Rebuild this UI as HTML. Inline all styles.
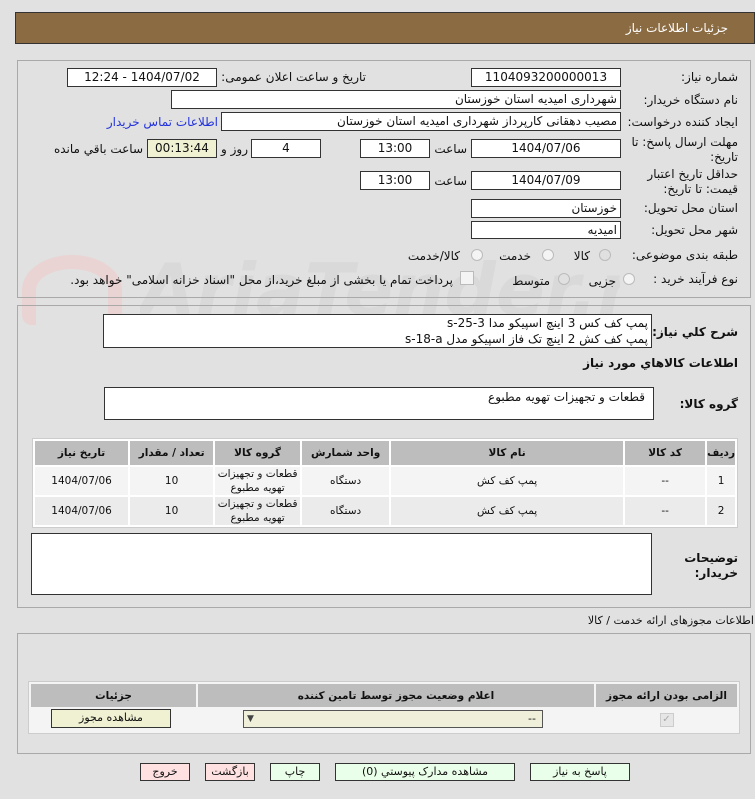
<!DOCTYPE html>
<html><head><meta charset="utf-8"><style>
body{margin:0;width:755px;height:799px;background:#e1e1e1;position:relative;overflow:hidden;font-family:"DejaVu Sans","Liberation Sans",sans-serif;font-size:11px;color:#111}
.a{position:absolute}
.t{position:absolute;white-space:nowrap;direction:rtl;line-height:14px}
.b{position:absolute;background:#fff;border:1px solid #333;box-sizing:border-box;direction:rtl;padding:0 3px;line-height:16px;font-size:12px;white-space:nowrap;overflow:hidden}
.c{text-align:center;padding:0}
.p{position:absolute;border:1px solid #a9a9a9;box-sizing:border-box}
.r{position:absolute;width:12px;height:12px;border-radius:50%;border:1px solid #bbb;background:#f4f4f4;box-sizing:border-box}
table{border-collapse:separate;border-spacing:2px;position:absolute;font-size:10.5px;direction:rtl}
td,th{text-align:center;padding:0}
th{background:#bdbdbd;font-weight:bold}
.btn{position:absolute;border:1px solid #333;box-sizing:border-box;text-align:center;line-height:16px;font-size:11px;direction:rtl}
.g{background:#eaffea}.k{background:#ffe1e1}
.wm{position:absolute;left:140px;top:245px;width:480px;overflow:hidden;font:italic bold 72px "DejaVu Sans",sans-serif;color:#d9d9d9;white-space:nowrap;line-height:90px}
</style></head><body>
<div class="wm">AriaTender.net</div>
<div class="a" style="left:22px;top:255px;width:100px;height:70px;border:14px solid #ead3d3;border-radius:50% 50% 10px 10px;border-bottom:none;box-sizing:border-box"></div>

<div class="a" style="left:15px;top:12px;width:740px;height:32px;background:#8b6b42;border:1px solid #333;box-sizing:border-box"></div>
<div class="t" style="right:27px;top:21px;color:#fff;font-size:12px">جزئیات اطلاعات نیاز</div>

<div class="p" style="left:17px;top:60px;width:734px;height:238px"></div>
<div class="t" style="right:17px;top:70px;font-size:12px">شماره نیاز:</div>
<div class="b c" style="left:471px;top:68px;width:150px;height:19px">1104093200000013</div>
<div class="t" style="right:389px;top:70px;font-size:12px">تاریخ و ساعت اعلان عمومی:</div>
<div class="b c" style="left:67px;top:68px;width:150px;height:19px">1404/07/02 - 12:24</div>

<div class="t" style="right:17px;top:93px;font-size:12px">نام دستگاه خریدار:</div>
<div class="b" style="left:171px;top:90px;width:450px;height:19px">شهرداری امیدیه استان خوزستان</div>

<div class="t" style="right:17px;top:115px;font-size:12px">ایجاد کننده درخواست:</div>
<div class="b" style="left:221px;top:112px;width:400px;height:19px">مصیب دهقانی کارپرداز شهرداری امیدیه استان خوزستان</div>
<div class="t" style="right:537px;top:115px;font-size:12px;color:#2233dd">اطلاعات تماس خریدار</div>

<div class="t" style="right:17px;top:135px;font-size:12px;line-height:15px">مهلت ارسال پاسخ: تا<br>تاریخ:</div>
<div class="b c" style="left:471px;top:139px;width:150px;height:19px">1404/07/06</div>
<div class="t" style="right:288px;top:142px;font-size:12px">ساعت</div>
<div class="b c" style="left:360px;top:139px;width:70px;height:19px">13:00</div>
<div class="b c" style="left:251px;top:139px;width:70px;height:19px">4</div>
<div class="t" style="right:507px;top:142px;font-size:12px">روز و</div>
<div class="b c" style="left:147px;top:139px;width:70px;height:19px;background:#f0f0d2">00:13:44</div>
<div class="t" style="right:612px;top:142px;font-size:12px">ساعت باقي مانده</div>

<div class="t" style="right:17px;top:167px;font-size:12px;line-height:15px">حداقل تاریخ اعتبار<br>قیمت: تا تاریخ:</div>
<div class="b c" style="left:471px;top:171px;width:150px;height:19px">1404/07/09</div>
<div class="t" style="right:288px;top:174px;font-size:12px">ساعت</div>
<div class="b c" style="left:360px;top:171px;width:70px;height:19px">13:00</div>

<div class="t" style="right:17px;top:201px;font-size:12px">استان محل تحویل:</div>
<div class="b" style="left:471px;top:199px;width:150px;height:19px">خوزستان</div>
<div class="t" style="right:17px;top:223px;font-size:12px">شهر محل تحویل:</div>
<div class="b" style="left:471px;top:221px;width:150px;height:18px">امیدیه</div>

<div class="t" style="right:17px;top:248px;font-size:12px">طبقه بندی موضوعی:</div>
<div class="r" style="left:599px;top:249px;background:#e0e0e0"></div>
<div class="t" style="right:165px;top:249px;font-size:12px">کالا</div>
<div class="r" style="left:542px;top:249px"></div>
<div class="t" style="right:224px;top:249px;font-size:12px">خدمت</div>
<div class="r" style="left:471px;top:249px"></div>
<div class="t" style="right:295px;top:249px;font-size:12px">کالا/خدمت</div>

<div class="t" style="right:17px;top:272px;font-size:12px">نوع فرآیند خرید :</div>
<div class="r" style="left:623px;top:273px"></div>
<div class="t" style="right:139px;top:274px;font-size:12px">جزیی</div>
<div class="r" style="left:558px;top:273px;background:#e0e0e0"></div>
<div class="t" style="right:205px;top:274px;font-size:12px">متوسط</div>
<div class="a" style="left:460px;top:271px;width:12px;height:12px;border:1px solid #bbb;background:#f4f4f4"></div>
<div class="t" style="right:302px;top:273px;font-size:12px">پرداخت تمام یا بخشی از مبلغ خرید،از محل "اسناد خزانه اسلامی" خواهد بود.</div>

<div class="p" style="left:17px;top:305px;width:734px;height:303px"></div>
<div class="t" style="right:17px;top:325px;font-size:12px;font-weight:bold">شرح كلي نياز:</div>
<div class="b" style="left:103px;top:314px;width:549px;height:34px;line-height:16px;font-size:12px">پمپ کف کس 3 اینچ اسپیکو مدا 3-25-s<br>پمپ کف کش 2 اینچ تک فاز اسپیکو مدل s-18-a</div>
<div class="t" style="right:17px;top:356px;font-size:12px;font-weight:bold">اطلاعات كالاهاي مورد نياز</div>
<div class="t" style="right:17px;top:397px;font-size:12px;font-weight:bold">گروه کالا:</div>
<div class="b" style="left:104px;top:387px;width:550px;height:33px;padding-right:8px;padding-top:1px">قطعات و تجهیزات تهویه مطبوع</div>

<table style="left:32px;top:438px;width:706px;background:#fff;border:1px solid #ccc">
<tr style="height:24px"><th style="width:26px">رديف</th><th style="width:80px">کد کالا</th><th style="width:232px">نام کالا</th><th style="width:87px">واحد شمارش</th><th style="width:85px">گروه کالا</th><th style="width:83px">تعداد / مقدار</th><th>تاريخ نياز</th></tr>
<tr style="height:28px;background:#f4f4f4"><td>1</td><td>--</td><td>پمپ کف کش</td><td>دستگاه</td><td style="line-height:14px">قطعات و تجهیزات<br>تهویه مطبوع</td><td>10</td><td>1404/07/06</td></tr>
<tr style="height:28px;background:#ebebeb"><td>2</td><td>--</td><td>پمپ کف کش</td><td>دستگاه</td><td style="line-height:14px">قطعات و تجهیزات<br>تهویه مطبوع</td><td>10</td><td>1404/07/06</td></tr>
</table>

<div class="b" style="left:31px;top:533px;width:621px;height:62px"></div>
<div class="t" style="right:17px;top:551px;font-size:12px;font-weight:bold;line-height:15px">توضیحات<br>خریدار:</div>

<div class="t" style="right:1px;top:614px;font-size:11px">اطلاعات مجوزهای ارائه خدمت / کالا</div>
<div class="p" style="left:17px;top:633px;width:734px;height:121px"></div>
<table style="left:28px;top:681px;width:712px;background:#f4f4f4;border:1px solid #ccc">
<tr style="height:23px"><th style="width:141px">الزامی بودن ارائه مجوز</th><th style="width:396px">اعلام وضعیت مجوز توسط تامین کننده</th><th>جزئیات</th></tr>
<tr style="height:22px"><td><span style="display:inline-block;width:12px;height:12px;border:1px solid #ccc;background:#e6e6e6;color:#aaa;font-size:10px;line-height:12px">✓</span></td><td></td><td></td></tr>
</table>
<div class="a" style="left:243px;top:710px;width:300px;height:18px;background:#f0f0da;border:1px solid #555;box-sizing:border-box;font-size:11px;line-height:16px"><span style="position:absolute;left:3px;font-size:9px;color:#444">▼</span><span style="position:absolute;right:6px">--</span></div>
<div class="btn" style="left:51px;top:709px;width:120px;height:19px;background:#f0f0d2">مشاهده مجوز</div>

<div class="btn g" style="left:530px;top:763px;width:100px;height:18px">پاسخ به نیاز</div>
<div class="btn g" style="left:335px;top:763px;width:180px;height:18px">مشاهده مدارک پیوستي (0)</div>
<div class="btn g" style="left:270px;top:763px;width:50px;height:18px">چاپ</div>
<div class="btn k" style="left:205px;top:763px;width:50px;height:18px">بازگشت</div>
<div class="btn k" style="left:140px;top:763px;width:50px;height:18px">خروج</div>
</body></html>
